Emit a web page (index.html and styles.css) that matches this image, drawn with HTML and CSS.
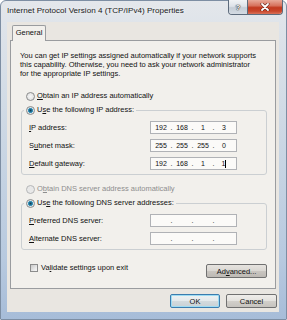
FILE: index.html
```html
<!DOCTYPE html>
<html>
<head>
<meta charset="utf-8">
<link rel="stylesheet" href="styles.css">
</head>
<body>
<div class="window">
  <div class="titlebar">
    <div class="title">Internet Protocol Version 4 (TCP/IPv4) Properties</div>
    <div class="caption-btns">
      <div class="cbtn help">?</div>
      <div class="cbtn close">
        <svg width="10" height="8" viewBox="0 0 10 8"><path d="M2 1 L8 7 M8 1 L2 7" stroke="#5a1a10" stroke-width="3" stroke-linecap="round"/><path d="M2 1 L8 7 M8 1 L2 7" stroke="#ffffff" stroke-width="1.8" stroke-linecap="round"/></svg>
      </div>
    </div>
  </div>
  <div class="client">
    <div class="tabs"><div class="tab">General</div></div>
    <div class="panel">
      <p class="intro">You can get IP settings assigned automatically if your network supports<br>this capability. Otherwise, you need to ask your network administrator<br>for the appropriate IP settings.</p>
      <div class="opt first"><span class="radio"></span><span><u>O</u>btain an IP address automatically</span></div>
      <div class="group g1">
        <div class="group-head"><span class="radio on"></span><span>U<u>s</u>e the following IP address:</span></div>
        <div class="row"><span class="lbl"><u>I</u>P address:</span><div class="ipbox"><span class="f">192</span><span class="d">.</span><span class="f">168</span><span class="d">.</span><span class="f">1</span><span class="d">.</span><span class="f">3</span></div></div>
        <div class="row"><span class="lbl">S<u>u</u>bnet mask:</span><div class="ipbox"><span class="f">255</span><span class="d">.</span><span class="f">255</span><span class="d">.</span><span class="f">255</span><span class="d">.</span><span class="f">0</span></div></div>
        <div class="row"><span class="lbl"><u>D</u>efault gateway:</span><div class="ipbox"><span class="f">192</span><span class="d">.</span><span class="f">168</span><span class="d">.</span><span class="f">1</span><span class="d">.</span><span class="f">1<span class="caret"></span></span></div></div>
      </div>
      <div class="opt second disabled"><span class="radio dis"></span><span>O<u>b</u>tain DNS server address automatically</span></div>
      <div class="group g2">
        <div class="group-head"><span class="radio on"></span><span>Us<u>e</u> the following DNS server addresses:</span></div>
        <div class="row"><span class="lbl"><u>P</u>referred DNS server:</span><div class="ipbox"><span class="f"></span><span class="d">.</span><span class="f"></span><span class="d">.</span><span class="f"></span><span class="d">.</span><span class="f"></span></div></div>
        <div class="row"><span class="lbl"><u>A</u>lternate DNS server:</span><div class="ipbox"><span class="f"></span><span class="d">.</span><span class="f"></span><span class="d">.</span><span class="f"></span><span class="d">.</span><span class="f"></span></div></div>
      </div>
      <div class="bottom-row">
        <div class="check-opt"><span class="checkbox"></span><span>Va<u>l</u>idate settings upon exit</span></div>
        <div class="btn adv">Ad<u>v</u>anced...</div>
      </div>
    </div>
    <div class="actions">
      <div class="btn ok">OK</div>
      <div class="btn cancel">Cancel</div>
    </div>
  </div>
</div>
</body>
</html>
```
FILE: styles.css
```css
html, body {
  margin: 0;
  padding: 0;
  background: #ffffff;
}
body {
  font-family: "Liberation Sans", Arial, sans-serif;
  font-size: 7.5px;
  color: #111111;
}
u { text-decoration: underline; text-underline-offset: 1px; }

.window {
  width: 287px;
  height: 320px;
  box-sizing: border-box;
  border: 1px solid #7d8ea3;
  border-radius: 6px 6px 1px 1px;
  background: linear-gradient(180deg, #e4e7eb 0px, #dfe4ea 22px, #cbd7e4 140px, #b7c9df 260px, #a6bcd8 320px);
  padding: 0 7px 7px 6px;
  display: flex;
  flex-direction: column;
}

.titlebar {
  height: 21px;
  display: flex;
  align-items: flex-start;
  margin-right: -7px;
}
.title {
  margin-top: 4px;
  font-size: 8.1px;
  line-height: 12px;
  color: #1a1a1a;
  text-shadow: 0 0 4px rgba(255,255,255,0.9);
}
.caption-btns {
  margin-left: auto;
  margin-right: 3px;
  margin-top: -1px;
  display: flex;
  height: 14px;
  border: 1px solid #5d6b7c;
  border-top: none;
  border-radius: 0 0 4px 4px;
  overflow: hidden;
}
.cbtn {
  height: 14px;
  display: flex;
  align-items: center;
  justify-content: center;
}
.help {
  width: 18px;
  background: linear-gradient(180deg, #f1f3f5 0%, #dde2e8 45%, #c5cdd6 55%, #d4dbe3 100%);
  border-right: 1px solid #5d6b7c;
  color: #ffffff;
  font-weight: bold;
  font-size: 8px;
  text-shadow: 0 0 1px #333, 0 0 1px #333, 0 0 1px #333;
}
.close {
  width: 34px;
  background: linear-gradient(180deg, #e8a999 0%, #d7735e 40%, #c2391f 55%, #c9472c 80%, #d9725a 100%);
}

.client {
  flex: 1;
  background: #e9e6e1;
  padding: 3px 3px 0 3px;
  display: flex;
  flex-direction: column;
}

.tabs {
  display: flex;
  padding-left: 2px;
}
.tab {
  position: relative;
  z-index: 1;
  width: 34px;
  height: 16px;
  box-sizing: border-box;
  border: 1px solid #9a9c9f;
  border-bottom: none;
  border-radius: 2px 2px 0 0;
  background: #f2f0ec;
  margin-bottom: -1px;
  text-align: center;
  line-height: 14px;
}

.panel {
  border: 1px solid #9a9c9f;
  background: #f2f0ec;
  padding: 0 8px 10px 10px;
}

.intro {
  margin: 10px 0 0 -1px;
  line-height: 9px;
  white-space: nowrap;
}

.opt {
  display: flex;
  align-items: center;
  gap: 2px;
  height: 10px;
  line-height: 10px;
  padding-left: 5px;
}
.opt.first { margin-top: 13px; }
.opt.second { margin-top: 9px; }
.opt.disabled { color: #8e8e8e; }

.radio {
  width: 9px;
  height: 9px;
  box-sizing: border-box;
  border-radius: 50%;
  border: 1px solid #8a8b8c;
  background: radial-gradient(circle at 50% 50%, #f6f6f6 0, #dcdcdc 100%);
  flex: none;
}
.radio.on {
  background: radial-gradient(circle at 50% 50%, #0e3f56 0, #226f92 1.4px, #3d9bc2 2.3px, #dde3e6 2.8px, #e6e6e6 100%);
}
.radio.dis {
  border-color: #b5b6b7;
  background: #e8e8e8;
}

.group {
  border: 1px solid #cbcfd2;
  border-radius: 3px;
  margin-top: 9px;
  padding-bottom: 4px;
}
.group-head {
  display: flex;
  align-items: center;
  gap: 2px;
  width: fit-content;
  height: 10px;
  line-height: 10px;
  margin: -6px 0 0 2px;
  padding: 0 2px;
  background: #f2f0ec;
}

.row {
  display: flex;
  align-items: center;
  height: 13px;
  margin-top: 5px;
  padding-left: 7px;
  padding-right: 29px;
}
.group-head + .row { margin-top: 6px; }
.lbl {
  flex: 1;
  line-height: 10px;
}
.ipbox {
  width: 87px;
  height: 13px;
  box-sizing: border-box;
  border: 1px solid #b0b2b6;
  background: #fbfaf8;
  display: flex;
  align-items: center;
  padding-left: 2px;
  line-height: 10px;
  font-size: 7px;
}
.f {
  width: 16px;
  display: flex;
  justify-content: center;
  align-items: center;
}
.d {
  width: 5px;
  text-align: center;
}
.caret {
  display: inline-block;
  width: 1px;
  height: 8px;
  background: #000;
}

.bottom-row {
  display: flex;
  align-items: flex-start;
  margin-top: 14px;
}
.check-opt {
  display: flex;
  align-items: center;
  gap: 3px;
  margin-left: 9px;
  line-height: 10px;
  height: 10px;
  margin-top: -1px;
}
.checkbox {
  width: 8px;
  height: 8px;
  box-sizing: border-box;
  border: 1px solid #8c8c8c;
  background: linear-gradient(135deg, #c9c9c9 0%, #ececec 70%, #f6f6f6 100%);
}

.btn {
  height: 14px;
  box-sizing: border-box;
  border: 1px solid #707070;
  border-radius: 2px;
  display: flex;
  align-items: center;
  justify-content: center;
  background: linear-gradient(180deg, #efedea 0%, #e4e2de 48%, #d2cfca 52%, #c6c3be 100%);
}
.adv {
  margin-left: auto;
  width: 61px;
  background: linear-gradient(180deg, #e6e3df 0%, #dad7d2 48%, #c9c5c0 52%, #bdb9b4 100%);
}

.actions {
  display: flex;
  justify-content: flex-end;
  gap: 6px;
  margin-top: 5px;
  margin-right: -1px;
}
.ok {
  width: 50px;
  border-color: #3b7cae;
  box-shadow: inset 0 0 0 1px #9edcf3;
  background: linear-gradient(180deg, #eef2f3 0%, #e4e9eb 48%, #d3dadd 52%, #c9d1d5 100%);
}
.cancel {
  width: 51px;
}
```
